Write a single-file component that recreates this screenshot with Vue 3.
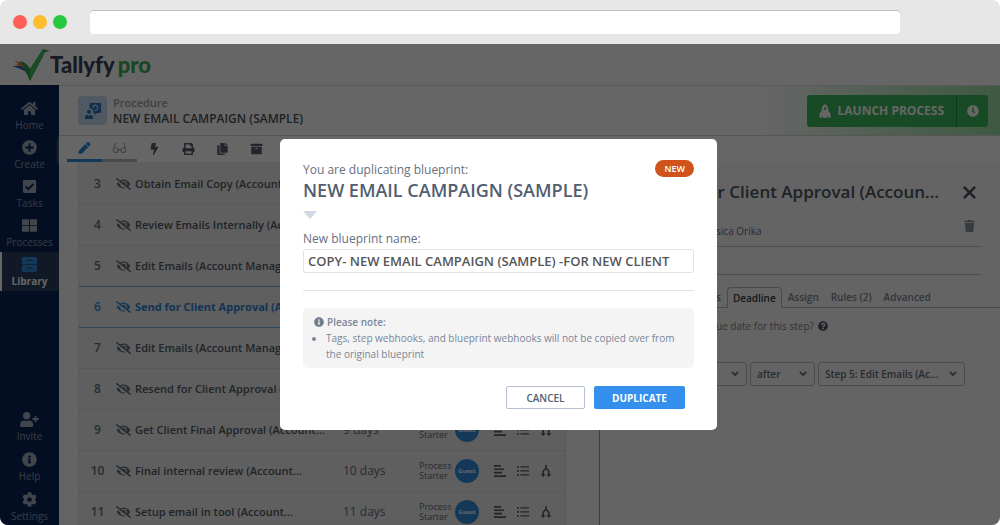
<script setup>
import { h, ref } from 'vue'

const shapes = {
  home: ['0 0 576 512', 'M280.37 148.26L96 300.11V464a16 16 0 0 0 16 16l112.06-.29a16 16 0 0 0 15.92-16V368a16 16 0 0 1 16-16h64a16 16 0 0 1 16 16v95.64a16 16 0 0 0 16 16.05L464 480a16 16 0 0 0 16-16V300L295.67 148.26a12.19 12.19 0 0 0-15.3 0zM571.6 251.47L488 182.56V44.05a12 12 0 0 0-12-12h-56a12 12 0 0 0-12 12v72.61L318.47 43a48 48 0 0 0-61 0L4.34 251.47a12 12 0 0 0-1.6 16.9l25.5 31A12 12 0 0 0 45.15 301l235.22-193.74a12.19 12.19 0 0 1 15.3 0L530.9 301a12 12 0 0 0 16.9-1.6l25.5-31a12 12 0 0 0-1.7-16.93z'],
  create: ['0 0 512 512', 'M256 8a248 248 0 1 0 0 496 248 248 0 0 0 0-496zm144 282H290v110h-68V290H112v-68h110V112h68v110h110z'],
  tasks: ['0 0 512 512', 'M80 32h352a48 48 0 0 1 48 48v352a48 48 0 0 1-48 48H80a48 48 0 0 1-48-48V80a48 48 0 0 1 48-48zm136 360L416 192l-45-45-155 155-75-75-45 45z'],
  processes: ['0 0 512 512', 'M30 40h210v196H0V70a30 30 0 0 1 30-30zm242 0h210a30 30 0 0 1 30 30v166H272zM0 268h240v204H30a30 30 0 0 1-30-30zm272 0h240v174a30 30 0 0 1-30 30H272z'],
  library: ['0 0 512 512', 'M40 0h432a40 40 0 0 1 40 40v196H0V40A40 40 0 0 1 40 0zm120 90v56h36v-22h120v22h36V90zM0 268h512v204a40 40 0 0 1-40 40H40a40 40 0 0 1-40-40zm160 90v56h36v-22h120v22h36v-56z'],
  invite: ['0 0 640 512', 'M624 208h-64v-64c0-8.8-7.2-16-16-16h-32c-8.8 0-16 7.2-16 16v64h-64c-8.8 0-16 7.2-16 16v32c0 8.8 7.2 16 16 16h64v64c0 8.8 7.2 16 16 16h32c8.8 0 16-7.2 16-16v-64h64c8.8 0 16-7.2 16-16v-32c0-8.8-7.2-16-16-16zm-400 48c70.7 0 128-57.3 128-128S294.7 0 224 0 96 57.3 96 128s57.3 128 128 128zm89.6 32h-16.7c-22.2 10.2-46.9 16-72.9 16s-50.6-5.8-72.9-16h-16.7C60.2 288 0 348.2 0 422.4V464c0 26.5 21.5 48 48 48h352c26.5 0 48-21.5 48-48v-41.6c0-74.2-60.2-134.4-134.4-134.4z'],
  info: ['0 0 512 512', 'M256 8C119.043 8 8 119.083 8 256c0 136.997 111.043 248 248 248s248-111.003 248-248C504 119.083 392.957 8 256 8zm0 110c23.196 0 42 18.804 42 42s-18.804 42-42 42-42-18.804-42-42 18.804-42 42-42zm56 254c0 6.627-5.373 12-12 12h-88c-6.627 0-12-5.373-12-12v-24c0-6.627 5.373-12 12-12h12v-64h-12c-6.627 0-12-5.373-12-12v-24c0-6.627 5.373-12 12-12h64c6.627 0 12 5.373 12 12v100h12c6.627 0 12 5.373 12 12v24z'],
  cog: ['0 0 512 512', 'M487.4 315.7l-42.6-24.6c4.3-23.2 4.3-47 0-70.2l42.6-24.6c4.9-2.8 7.1-8.6 5.5-14-11.1-35.6-30-67.8-54.7-94.6-3.8-4.1-10-5.1-14.8-2.3L380.8 110c-17.9-15.4-38.5-27.3-60.8-35.1V25.8c0-5.6-3.9-10.5-9.4-11.7-36.7-8.2-74.3-7.8-109.2 0-5.5 1.2-9.4 6.1-9.4 11.7V75c-22.2 7.9-42.8 19.8-60.8 35.1L88.7 85.5c-4.9-2.8-11-1.9-14.8 2.3-24.7 26.7-43.6 58.9-54.7 94.6-1.7 5.4.6 11.2 5.5 14L67.3 221c-4.3 23.2-4.3 47 0 70.2l-42.6 24.6c-4.9 2.8-7.1 8.6-5.5 14 11.1 35.6 30 67.8 54.7 94.6 3.8 4.1 10 5.1 14.8 2.3l42.6-24.6c17.9 15.4 38.5 27.3 60.8 35.1v49.2c0 5.6 3.9 10.5 9.4 11.7 36.7 8.2 74.3 7.8 109.2 0 5.5-1.2 9.4-6.1 9.4-11.7v-49.2c22.2-7.9 42.8-19.8 60.8-35.1l42.6 24.6c4.9 2.8 11 1.9 14.8-2.3 24.7-26.7 43.6-58.9 54.7-94.6 1.5-5.5-.7-11.3-5.6-14.1zM256 336c-44.1 0-80-35.9-80-80s35.9-80 80-80 80 35.9 80 80-35.9 80-80 80z'],
  pencil: ['0 0 512 512', 'M497.9 142.1l-46.1 46.1c-4.7 4.7-12.3 4.7-17 0l-111-111c-4.7-4.7-4.7-12.3 0-17l46.1-46.1c18.7-18.7 49.1-18.7 67.9 0l60.1 60.1c18.8 18.7 18.8 49.1 0 67.9zM284.2 99.8L21.6 362.4.4 483.9c-2.9 16.4 11.4 30.6 27.8 27.8l121.5-21.3 262.6-262.6c4.7-4.7 4.7-12.3 0-17l-111-111c-4.8-4.7-12.4-4.7-17.1 0z'],
  glasses: ['0 0 576 512', 'M150 32C110 32 85 50 76 88L24 280C8 300 0 320 0 345c0 75 50 130 125 130 72 0 125-50 127-120h72c2 70 55 120 127 120 75 0 125-55 125-130 0-25-8-45-24-65L500 88c-9-38-34-56-74-56v44c17 0 27 8 31 23l38 141c-70-22-150 10-168 70h-78c-18-60-98-92-168-70l38-141c4-15 14-23 31-23zM125 270c50 0 80 30 80 75s-32 84-80 84-78-38-78-84 30-75 78-75zm326 0c48 0 78 30 78 75s-30 84-78 84-80-38-80-84 30-75 80-75z'],
  bolt: ['0 0 320 512', 'M296 160H180.6l42.6-129.8C227.2 15 215.7 0 200 0H56C44 0 33.8 8.9 32.2 20.8l-32 240C-1.7 275.2 9.5 288 24 288h118.7L96.6 482.5c-3.6 15.2 8 29.5 23.3 29.5 8.4 0 16.4-4.4 20.8-12l176-304c9.3-15.9-2.2-36-20.7-36z'],
  print: ['0 0 512 512', 'M448 192V77.25c0-8.49-3.37-16.62-9.37-22.63L393.37 9.37c-6-6-14.14-9.37-22.63-9.37H96C78.33 0 64 14.33 64 32v160c-35.35 0-64 28.65-64 64v112c0 8.84 7.16 16 16 16h48v96c0 17.67 14.33 32 32 32h320c17.67 0 32-14.33 32-32v-96h48c8.84 0 16-7.16 16-16V256c0-35.35-28.65-64-64-64zm-64 256H128v-96h256v96zm0-224H128V64h192v48c0 8.84 7.16 16 16 16h48v96z'],
  copy: ['0 0 448 512', 'M320 448v40c0 13.255-10.745 24-24 24H24c-13.255 0-24-10.745-24-24V120c0-13.255 10.745-24 24-24h72v296c0 30.879 25.121 56 56 56h168zm0-344V0H152c-13.255 0-24 10.745-24 24v368c0 13.255 10.745 24 24 24h272c13.255 0 24-10.745 24-24V128H344c-13.2 0-24-10.8-24-24zm120.971-31.029L375.029 7.029A24 24 0 0 0 358.059 0H352v96h96v-6.059a24 24 0 0 0-7.029-16.97z'],
  archive: ['0 0 512 512', 'M32 448c0 17.7 14.3 32 32 32h384c17.7 0 32-14.3 32-32V160H32v288zm160-212c0-6.6 5.4-12 12-12h104c6.6 0 12 5.4 12 12v8c0 6.6-5.4 12-12 12H204c-6.6 0-12-5.4-12-12v-8zM480 32H32C14.3 32 0 46.3 0 64v48c0 8.8 7.2 16 16 16h480c8.8 0 16-7.2 16-16V64c0-17.7-14.3-32-32-32z'],
  eyeOff: ['0 0 640 512', 'M320 400c-75.85 0-137.25-58.71-142.9-133.11L72.2 185.82c-13.79 17.3-26.48 35.59-36.72 55.59a32.35 32.35 0 0 0 0 29.19C89.71 376.41 197.07 448 320 448c26.91 0 52.87-4 77.89-10.46L346 397.39a144.13 144.13 0 0 1-26 2.61zm313.82 58.1l-110.55-85.44a331.25 331.25 0 0 0 81.25-102.07 32.35 32.35 0 0 0 0-29.19C550.29 135.59 442.93 64 320 64a308.15 308.15 0 0 0-147.32 37.7L45.46 3.37A16 16 0 0 0 23 6.18L3.37 31.45A16 16 0 0 0 6.18 53.9l588.36 454.73a16 16 0 0 0 22.46-2.81l19.64-25.27a16 16 0 0 0-2.82-22.45zm-183.72-142l-39.3-30.38A94.75 94.75 0 0 0 416 256a94.76 94.76 0 0 0-121.31-92.21A47.65 47.65 0 0 1 304 192a46.64 46.64 0 0 1-1.54 10l-73.61-56.89A142.31 142.31 0 0 1 320 112a143.92 143.92 0 0 1 144 144c0 21.63-5.29 41.79-13.9 60.11z'],
  trash: ['0 0 448 512', 'M432 32H312l-9.4-18.7A24 24 0 0 0 281.1 0H166.8a23.72 23.72 0 0 0-21.4 13.3L136 32H16A16 16 0 0 0 0 48v32a16 16 0 0 0 16 16h416a16 16 0 0 0 16-16V48a16 16 0 0 0-16-16zM53.2 467a48 48 0 0 0 47.9 45h245.8a48 48 0 0 0 47.9-45L416 128H32z'],
  clock: ['0 0 512 512', 'M256 8C119 8 8 119 8 256s111 248 248 248 248-111 248-248S393 8 256 8zm92.49 313l-20 25a16 16 0 0 1-22.49 2.5l-67-49.72a40 40 0 0 1-15-31.23V112a16 16 0 0 1 16-16h32a16 16 0 0 1 16 16v144l58 42.5a16 16 0 0 1 2.49 22.5z'],
  question: ['0 0 512 512', 'M504 256c0 136.997-111.043 248-248 248S8 392.997 8 256C8 119.083 119.043 8 256 8s248 111.083 248 248zM262.655 90c-54.497 0-89.255 22.957-116.549 63.758-3.536 5.286-2.353 12.415 2.715 16.258l34.699 26.31c5.205 3.947 12.621 3.008 16.665-2.122 17.864-22.658 30.113-35.797 57.303-35.797 20.429 0 45.698 13.148 45.698 32.958 0 14.976-12.363 22.667-32.534 33.976C247.128 238.528 216 254.941 216 296v4c0 6.627 5.373 12 12 12h56c6.627 0 12-5.373 12-12v-1.333c0-28.462 83.186-29.647 83.186-106.667 0-58.002-60.165-102-116.531-102zM256 338c-25.365 0-46 20.635-46 46 0 25.364 20.635 46 46 46s46-20.636 46-46c0-25.365-20.635-46-46-46z'],
  lines: ['0 0 12 12', 'M0 0h7v1.7H0zM0 3.4h10v1.7H0zM0 6.8h8v1.7H0zM0 10.2h12v1.7H0z'],
  list: ['0 0 12 12', 'M0 1h1.8v1.8H0zM3.4 1.3H12v1.2H3.4zM0 5h1.8v1.8H0zM3.4 5.3H12v1.2H3.4zM0 9h1.8v1.8H0zM3.4 9.3H12v1.2H3.4z'],
  branch: ['0 0 12 12', 'M5.2 0h1.6v2.7L9.6 6v3.2H11.5L8.9 12 6.3 9.2H8V6.6L6 4.2 4 6.6v2.6h1.7L3.1 12 .5 9.2h1.9V6l2.8-3.3z'],
  chevron: ['0 0 12 12', 'M.4 3.6L2.2 1.8 6 5.600l3.800-3.800 1.800 1.800L6 9.200z'],
  close: ['0 0 12 12', 'M0 1.700L1.700 0 6 4.300 10.300 0 12 1.700 7.700 6l4.300 4.300-1.700 1.700L6 7.700 1.700 12 0 10.300 4.300 6z'],
  rocket: ['0 0 12 14', 'M6 0c2.4 1.4 3.4 3.4 3.4 6v1.2L11.500 9V14H9.6v-1.200H7.900V14H4.100v-1.200H2.400V14H.5V9l2.100-1.800V6C2.600 3.400 3.600 1.400 6 0zm0 3.300a1.300 1.300 0 1 0 0 2.600 1.300 1.300 0 0 0 0-2.600z'],
  guide: ['0 0 16 16', 'M5.500 0H15a1 1 0 0 1 1 1v8a1 1 0 0 1-1 1h-3l-2.500 2.300V10H8.300A3.400 3.400 0 0 0 4.500 5.500V1a1 1 0 0 1 1-1zm4.800 1.600A3 3 0 0 0 7.500 4.800h1.300a1.700 1.700 0 1 1 2.300 1.500l-1 .7V8h1.300v-.6a3 3 0 0 0-1.100-5.800zM4 6.700A2.100 2.100 0 1 1 4 10.900a2.100 2.100 0 0 1 0-4.200zM0 16v-1.700a2.600 2.600 0 0 1 2.600-2.600L4 13l1.400-1.300A2.600 2.600 0 0 1 8 14.300V16z']
}

function Glyph({ name }) {
  const [viewBox, d] = shapes[name]
  return h('svg', { viewBox, fill: 'currentColor', 'fill-rule': 'evenodd', 'aria-hidden': 'true' }, [h('path', { d })])
}
Glyph.props = ['name']

const mainNav = [
  { label: 'Home', icon: 'home' },
  { label: 'Create', icon: 'create' },
  { label: 'Tasks', icon: 'tasks' },
  { label: 'Processes', icon: 'processes' },
  { label: 'Library', icon: 'library', active: true }
]
const footNav = [
  { label: 'Invite', icon: 'invite' },
  { label: 'Help', icon: 'info' },
  { label: 'Settings', icon: 'cog' }
]
const tools = [
  { icon: 'pencil', label: 'Edit' },
  { icon: 'glasses', label: 'Read' },
  { icon: 'bolt', label: 'Automations' },
  { icon: 'print', label: 'Print' },
  { icon: 'copy', label: 'Duplicate' },
  { icon: 'archive', label: 'Archive' }
]
const steps = [
  { n: 3, title: 'Obtain Email Copy (Account...' },
  { n: 4, title: 'Review Emails Internally (Account...' },
  { n: 5, title: 'Edit Emails (Account Manager)' },
  { n: 6, title: 'Send for Client Approval (Account...', selected: true },
  { n: 7, title: 'Edit Emails (Account Manager)' },
  { n: 8, title: 'Resend for Client Approval (Account...' },
  { n: 9, title: 'Get Client Final Approval (Account...', days: 9 },
  { n: 10, title: 'Final internal review (Account...', days: 10 },
  { n: 11, title: 'Setup email in tool (Account...', days: 11 }
]
const newName = ref('COPY- NEW EMAIL CAMPAIGN (SAMPLE) -FOR NEW CLIENT')
</script>

<template>
  <div class="window">
    <div class="chrome">
      <span class="dot red"></span>
      <span class="dot amber"></span>
      <span class="dot green"></span>
      <input class="address" type="text" aria-label="Address" />
    </div>

    <div class="app">
      <header class="brand">
        <svg class="bird" viewBox="0 0 38 33" aria-hidden="true">
          <path fill="#e8792b" d="M2 13l10 2 4 7-7-4-6-1 4-1z" />
          <path fill="#2a62b0" d="M0 18l9 0 6 4 4 10-6-9-7-3z" />
          <path fill="#2f9e48" d="M8 13c5 1 8 4 10 8L31 1l7 2-5 1L18 33 12 19z" />
          <path fill="#46bd5c" d="M18 21L31 1l2 3-15 29z" />
        </svg>
        <span class="word">Tallyfy</span><span class="pro">pro</span>
      </header>

      <div class="body">
        <nav class="side">
          <a v-for="item in mainNav" :key="item.label" href="#" :class="['nav', { active: item.active }]">
            <Glyph :name="item.icon" />
            <span>{{ item.label }}</span>
          </a>
          <div class="spacer"></div>
          <a v-for="item in footNav" :key="item.label" href="#" class="nav foot">
            <Glyph :name="item.icon" />
            <span>{{ item.label }}</span>
          </a>
        </nav>

        <main class="main">
          <div class="titlebar">
            <span class="tile"><Glyph name="guide" /></span>
            <div class="crumb">
              <div class="kind">Procedure</div>
              <div class="name">NEW EMAIL CAMPAIGN (SAMPLE)</div>
            </div>
            <div class="launch">
              <button type="button" class="go"><Glyph name="rocket" />LAUNCH PROCESS</button>
              <button type="button" class="later" aria-label="Schedule launch"><Glyph name="clock" /></button>
            </div>
          </div>

          <div class="tools">
            <button v-for="t in tools" :key="t.icon" type="button" :aria-label="t.label" :class="['tool', t.icon]">
              <Glyph :name="t.icon" />
            </button>
          </div>

          <div class="content">
            <section class="steps">
              <div v-for="s in steps" :key="s.n" :class="['step', { selected: s.selected }]">
                <span class="num">{{ s.n }}</span>
                <Glyph name="eyeOff" class="eye" />
                <span class="title">{{ s.title }}</span>
                <template v-if="s.days">
                  <span class="days">{{ s.days }} days</span>
                  <span class="who">Process Starter</span>
                  <span class="avatar">Guest</span>
                  <Glyph name="lines" class="act" />
                  <Glyph name="list" class="act" />
                  <Glyph name="branch" class="act" />
                </template>
              </div>
            </section>

            <section class="detail">
              <div class="dhead">
                <div class="dtitle">Send for Client Approval (Accoun...</div>
                <button type="button" class="round" aria-label="Close"><Glyph name="close" /></button>
              </div>
              <div class="dmeta">
                <div class="author">Jessica Orika</div>
                <button type="button" class="round bin" aria-label="Delete step"><Glyph name="trash" /></button>
              </div>
              <div class="summary"></div>
              <div class="tabs">
                <a href="#" class="tab">Basics</a>
                <a href="#" class="tab on">Deadline</a>
                <a href="#" class="tab">Assign</a>
                <a href="#" class="tab">Rules (2)</a>
                <a href="#" class="tab">Advanced</a>
              </div>
              <div class="ask"><span>What is the due date for this step?</span><Glyph name="question" /></div>
              <div class="picks">
                <div class="pick unit">
                  <select aria-label="Unit"><option>days</option></select><Glyph name="chevron" />
                </div>
                <div class="pick when">
                  <select aria-label="Before or after"><option>after</option></select><Glyph name="chevron" />
                </div>
                <div class="pick from">
                  <select aria-label="Starting point"><option>Step 5: Edit Emails (Ac...</option></select><Glyph name="chevron" />
                </div>
              </div>
            </section>
          </div>
        </main>
      </div>

      <div class="overlay">
        <form class="modal" role="dialog" aria-labelledby="dup-title" @submit.prevent>
          <div class="top">
            <div>
              <div class="lead">You are duplicating blueprint:</div>
              <h1 id="dup-title">NEW EMAIL CAMPAIGN (SAMPLE)</h1>
            </div>
            <span class="badge">NEW</span>
          </div>
          <svg class="caret" viewBox="0 0 14 8" aria-hidden="true"><path d="M0 0h14L7 8z" fill="#cfd8e3" /></svg>
          <label class="lead" for="bp-name">New blueprint name:</label>
          <input id="bp-name" v-model="newName" class="field" type="text" />
          <hr />
          <div class="note">
            <div class="note-head"><Glyph name="info" />Please note:</div>
            <ul>
              <li>Tags, step webhooks, and blueprint webhooks will not be copied over from the original blueprint</li>
            </ul>
          </div>
          <div class="actions">
            <button type="button" class="cancel">CANCEL</button>
            <button type="submit" class="primary">DUPLICATE</button>
          </div>
        </form>
      </div>
    </div>
  </div>
</template>

<style>
body { margin: 0; background: #fff; }
</style>

<style scoped>
* { box-sizing: border-box; }
.window {
  height: 100vh;
  display: flex;
  flex-direction: column;
  overflow: hidden;
  border-radius: 8px;
  font-family: "Open Sans", "Noto Sans", sans-serif;
  color: #606f7b;
}
button, input, select { font: inherit; color: inherit; }
button { border: 0; padding: 0; background: none; cursor: pointer; }
a { color: inherit; text-decoration: none; }

.chrome {
  flex: none;
  height: 44px;
  display: flex;
  align-items: center;
  gap: 6px;
  padding: 0 100px 0 13px;
  background: #e7e7e7;
}
.dot { width: 14px; height: 14px; border-radius: 50%; }
.red { background: #fe5f58; }
.amber { background: #febc2f; }
.green { background: #27c840; }
.address {
  flex: 1;
  height: 24px;
  margin-left: 17px;
  padding: 0 8px;
  border: 0;
  border-top: 1px solid #bfbfbf;
  border-radius: 4px;
  background: #fff;
}

.app { position: relative; flex: 1; min-height: 0; display: flex; flex-direction: column; background: #fff; }
.brand {
  flex: none;
  height: 41px;
  display: flex;
  align-items: center;
  padding-left: 12px;
  line-height: 28px;
  font-size: 22px;
  font-family: Lato, sans-serif;
}
.bird { width: 38px; height: 33px; }
.word { font-weight: 900; color: #3b4358; }
.pro { margin-left: 3px; font-weight: 900; color: #3fae55; }

.body { flex: 1; min-height: 0; display: flex; }
.side {
  flex: none;
  width: 59px;
  display: flex;
  flex-direction: column;
  padding-top: 11px;
  background: #0b2555;
  color: #8795ad;
}
.nav {
  flex: none;
  height: 39px;
  display: flex;
  flex-direction: column;
  align-items: center;
  gap: 2px;
  padding-top: 5px;
  border-left: 2px solid transparent;
  border-right: 2px solid transparent;
  font-size: 10px;
  line-height: 14px;
}
.nav svg { flex: none; width: 17px; height: 15px; color: #a4aec0; }
.nav.active { border-left-color: #fff; background: #2a3f5d; color: #fff; font-weight: 700; }
.nav.active svg { color: #3490dc; }
.nav.foot { height: 40px; padding-top: 7px; }
.nav.foot svg { width: 19px; }
.spacer { flex: 1; }

.main { flex: 1; min-width: 0; display: flex; flex-direction: column; }
.titlebar {
  flex: none;
  height: 51px;
  display: flex;
  align-items: center;
  gap: 6px;
  padding: 0 12px 0 19px;
  border-top: 1px solid #e4e4e4;
  border-bottom: 1px solid #dcdcdc;
  background: linear-gradient(90deg, #fff 74%, #9be0a6 100%);
}
.tile { width: 29px; height: 29px; display: grid; place-items: center; border-radius: 4px; background: #c8ddf2; color: #2a76bd; }
.tile svg { width: 16px; height: 16px; }
.crumb { flex: 1; font-weight: 600; line-height: 16px; }
.kind { font-size: 11px; color: #9aa0a8; }
.name { font-size: 12px; color: #4b535d; }
.launch { height: 32px; display: flex; border-radius: 3px; overflow: hidden; background: #3dbc5c; color: #fff; }
.go { display: flex; align-items: center; gap: 7px; padding: 0 12px; font-size: 12px; font-weight: 700; }
.go svg { width: 12px; height: 14px; }
.later { width: 32px; display: grid; place-items: center; border-left: 1px solid #1f8f3e; }
.later svg { width: 12px; height: 12px; }

.tools { flex: none; height: 26px; display: flex; padding-left: 8px; box-shadow: 0 1px 3px #bbb; }
.tool { width: 34px; height: 26px; display: grid; place-items: center; color: #56606d; }
.tool svg { width: 13px; height: 12px; }
.tool.pencil { width: 35px; color: #2b84d6; border-bottom: 3px solid #3490dc; }
.tool.glasses { width: 35px; color: #9aa2ae; border-bottom: 3px solid #b7bdc6; }
.tool.glasses svg { width: 15px; }

.content { flex: 1; min-height: 0; display: flex; background: #f9f9f9; }
.steps {
  flex: 0 1 488px;
  min-width: 0;
  margin-left: 19px;
  padding-top: 2px;
  border: solid #dedede;
  border-width: 0 1px;
  background: #ededed;
  overflow: hidden;
}
.step {
  height: 41px;
  display: flex;
  align-items: center;
  border-bottom: 1px solid #dcdcdc;
  font-size: 12px;
  line-height: 16px;
}
.step:has(+ .selected), .selected { border-bottom-color: #6cb2eb; }
.num { width: 37px; text-align: center; font-weight: 600; }
.eye { width: 15px; height: 12px; margin-right: 4px; }
.title { flex: 1; min-width: 0; overflow: hidden; white-space: nowrap; font-size: 11px; font-weight: 600; color: #515b67; }
.selected { color: #3490dc; }
.selected .title { color: #2b84d6; font-weight: 700; }
.days { width: 76px; }
.who { width: 36px; font-size: 9px; line-height: 10px; }
.avatar {
  width: 24px;
  height: 24px;
  margin-right: 15px;
  display: grid;
  place-items: center;
  border-radius: 50%;
  background: #3490dc;
  color: #fff;
  font-size: 6px;
  font-weight: 700;
}
.act { width: 12px; height: 12px; margin-right: 11px; color: #56606d; }
.act:last-child { margin-right: 13px; }

.detail { flex: 1; min-width: 0; margin-left: 33px; border-left: 1px solid #6ba4ec; background: #f9f9f9; }
.dhead, .dmeta { display: flex; align-items: center; margin-right: 19px; }
.dhead { height: 46px; padding-top: 14px; }
.dtitle { flex: 1; padding-right: 18px; text-align: right; white-space: nowrap; font-size: 17px; line-height: 24px; font-weight: 600; color: #4d5662; }
.round { width: 24px; height: 24px; display: grid; place-items: center; }
.round svg { width: 13px; height: 13px; color: #4d5662; }
.dmeta { height: 39px; padding-bottom: 2px; border-bottom: 1px solid #c4c4c4; }
.dmeta .author { flex: 1; align-self: flex-end; padding: 0 0 6px 103px; font-size: 10px; line-height: 14px; }
.bin svg { height: 12px; color: #8b939d; }
.summary { height: 28px; margin-right: 19px; border-bottom: 1px solid #c4c4c4; }
.tabs { height: 33px; display: flex; align-items: flex-end; padding-left: 85px; border-bottom: 1px solid #b8b8b8; font-size: 10px; font-weight: 600; line-height: 20px; }
.tab { padding: 0 6px; white-space: nowrap; color: #7c8795; }
.on { margin-bottom: -1px; padding: 0 5px; border: 1px solid #b8b8b8; border-bottom: 0; border-radius: 4px 4px 0 0; background: #f9f9f9; color: #333b45; }
.ask { display: flex; align-items: center; gap: 4px; padding: 10px 0 0 55px; font-size: 10px; line-height: 16px; color: #78828f; }
.ask svg { width: 10px; height: 10px; color: #4d5662; }
.picks { display: flex; gap: 3px; margin-top: 28px; padding-left: 73px; }
.pick { position: relative; height: 24px; font-size: 10px; font-weight: 600; }
.pick select { width: 100%; height: 24px; padding: 0 20px 0 6px; appearance: none; border: 1px solid #bcbcbc; border-radius: 3px; background: none; }
.pick svg { position: absolute; right: 8px; top: 8px; width: 8px; height: 8px; pointer-events: none; }
.unit { width: 74px; }
.when { width: 65px; }
.from { width: 147px; }

.overlay {
  position: absolute;
  inset: 0;
  display: flex;
  align-items: center;
  justify-content: center;
  padding-right: 3px;
  background: rgba(0, 0, 0, 0.6);
}
.modal { width: 437px; padding: 21px 23px; border-radius: 5px; background: #fff; color: #667080; }
.top { display: flex; justify-content: space-between; align-items: flex-start; }
.lead { display: block; font-size: 12px; line-height: 20px; }
h1 { margin: 0; font-size: 18px; line-height: 20px; font-weight: 600; color: #525e70; }
.badge { padding: 0 9px; border-radius: 9px; background: #d0531b; color: #fff; font-size: 9px; font-weight: 600; line-height: 17px; }
.caret { display: block; width: 14px; height: 8px; margin: 11px 0 10px; }
.field { display: block; width: 100%; height: 24px; padding: 0 4px; border: 1px solid #e2e2e2; border-radius: 3px; background: #fff; color: #565656; font-size: 13px; font-weight: 600; }
hr { height: 1px; margin: 17px 0; border: 0; background: #e0e2e4; }
.note { padding: 6px 11px; border-radius: 5px; background: #f4f4f4; font-size: 10px; line-height: 16px; color: #7a8698; }
.note-head { display: flex; align-items: center; gap: 3px; font-weight: 600; }
.note-head svg { width: 10px; height: 10px; color: #6f7c90; }
ul { margin: 0; padding: 0 0 0 12px; }
.actions { display: flex; justify-content: flex-end; gap: 9px; padding: 18px 9px 0 0; }
.cancel { width: 79px; height: 23px; border: 1px solid #b4c0d0; border-radius: 2px; font-weight: 600; font-size: 10px; color: #525e70; }
.primary { width: 91px; height: 23px; border-radius: 2px; background: #3490ec; color: #fff; font-size: 10px; font-weight: 700; }
</style>
